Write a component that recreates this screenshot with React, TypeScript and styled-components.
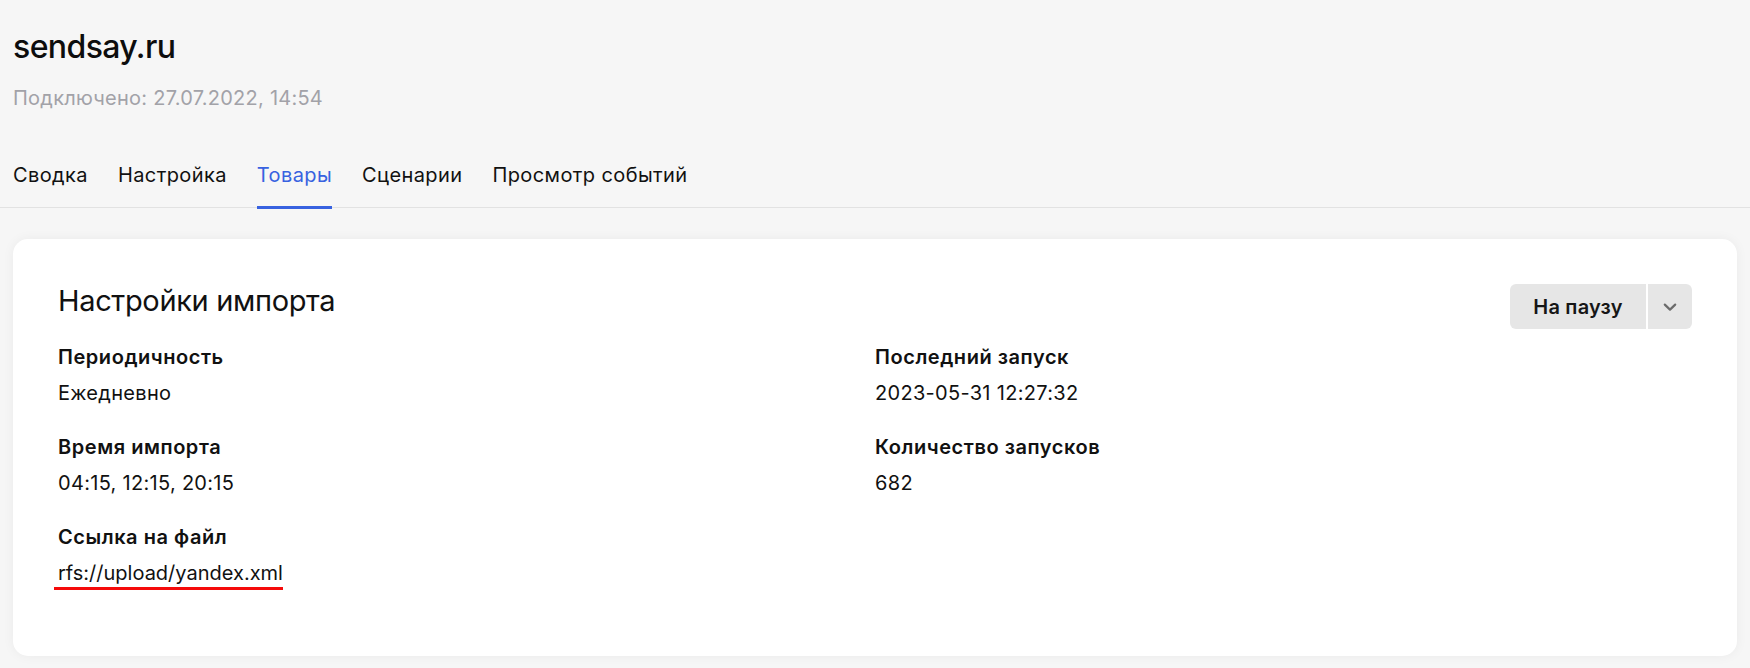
import styled, { createGlobalStyle } from "styled-components";

const GlobalStyle = createGlobalStyle`
  body {
    margin: 0;
    background: #f6f6f6;
    font-family: Inter, "Noto Sans", sans-serif;
    color: #111;
  }
`;

const Page = styled.div`
  padding: 0 13px 12px;
`;

const Header = styled.header`
  padding-top: 27px;
`;

const Title = styled.h1`
  margin: 0;
  font-size: 32px;
  line-height: 40px;
  font-weight: 500;
  letter-spacing: -0.6px;
  color: #0d0d0d;
`;

const Subtitle = styled.div`
  margin-top: 19px;
  font-size: 20px;
  line-height: 24px;
  letter-spacing: 0.25px;
  color: #a2a2a8;
`;

const Tabs = styled.nav`
  display: flex;
  gap: 30px;
  margin: 53px -13px 0;
  padding: 0 13px;
  border-bottom: 1px solid #e2e2e2;
`;

const Tab = styled.a<{ $active?: boolean }>`
  display: block;
  padding-bottom: 19px;
  margin-bottom: -2px;
  font-size: 20px;
  line-height: 24px;
  letter-spacing: 0.4px;
  color: ${(p) => (p.$active ? "#3862e0" : "#111")};
  border-bottom: 3px solid ${(p) => (p.$active ? "#3862e0" : "transparent")};
  cursor: pointer;
`;

const Card = styled.section`
  margin-top: 31px;
  background: #fff;
  border-radius: 15px;
  box-shadow: 0 0 12px rgba(0, 0, 0, 0.05);
  padding: 45px 45px 66px;
`;

const CardHead = styled.div`
  display: flex;
  justify-content: space-between;
  align-items: flex-start;
`;

const CardTitle = styled.h2`
  margin: -1px 0 0;
  font-size: 29px;
  line-height: 36px;
  font-weight: 400;
  letter-spacing: -0.35px;
`;

const SplitButton = styled.div`
  display: flex;
  gap: 2px;
`;

const BtnPart = styled.button<{ $side: "main" | "menu" }>`
  border: none;
  background: #e6e6e6;
  height: 45px;
  font-family: inherit;
  font-size: 20px;
  font-weight: 600;
  letter-spacing: 0.2px;
  color: #161616;
  padding: 0;
  width: ${(p) => (p.$side === "main" ? "136px" : "44px")};
  border-radius: ${(p) => (p.$side === "main" ? "6px 0 0 6px" : "0 6px 6px 0")};
  display: flex;
  align-items: center;
  justify-content: center;
  cursor: pointer;
`;

const Grid = styled.div`
  display: grid;
  grid-template-columns: 1fr 1fr;
  row-gap: 30px;
  margin-top: 16px;
`;

const Field = styled.div``;

const Label = styled.div`
  font-size: 20px;
  line-height: 24px;
  font-weight: 600;
  letter-spacing: 0.55px;
`;

const Value = styled.div<{ $marked?: boolean }>`
  display: inline-block;
  margin-top: 12px;
  font-size: 20px;
  line-height: 24px;
  letter-spacing: ${(p) => (p.$marked ? "0" : "0.3px")};
  ${(p) =>
    p.$marked &&
    `
    padding: 0 0 2px 4px;
    margin-left: -4px;
    border-bottom: 3px solid #f50a0a;
  `}
`;

function Chevron() {
  return (
    <svg width="14" height="14" viewBox="0 0 14 14" fill="none">
      <path d="M1.8 4.6L7 9.6l5.2-5" stroke="#6b6b6b" strokeWidth="2.2" strokeLinecap="round" strokeLinejoin="round" />
    </svg>
  );
}

const fields: { label: string; value: string; marked?: boolean }[] = [
  { label: "Периодичность", value: "Ежедневно" },
  { label: "Последний запуск", value: "2023-05-31 12:27:32" },
  { label: "Время импорта", value: "04:15, 12:15, 20:15" },
  { label: "Количество запусков", value: "682" },
  { label: "Ссылка на файл", value: "rfs://upload/yandex.xml", marked: true },
];

export default function App() {
  return (
    <Page>
      <GlobalStyle />
      <Header>
        <Title>sendsay.ru</Title>
        <Subtitle>Подключено: 27.07.2022, 14:54</Subtitle>
      </Header>
      <Tabs>
        <Tab>Сводка</Tab>
        <Tab>Настройка</Tab>
        <Tab $active>Товары</Tab>
        <Tab>Сценарии</Tab>
        <Tab>Просмотр событий</Tab>
      </Tabs>
      <Card>
        <CardHead>
          <CardTitle>Настройки импорта</CardTitle>
          <SplitButton>
            <BtnPart $side="main">На паузу</BtnPart>
            <BtnPart $side="menu">
              <Chevron />
            </BtnPart>
          </SplitButton>
        </CardHead>
        <Grid>
          {fields.map((f) => (
            <Field key={f.label}>
              <Label>{f.label}</Label>
              <Value $marked={f.marked}>{f.value}</Value>
            </Field>
          ))}
        </Grid>
      </Card>
    </Page>
  );
}
